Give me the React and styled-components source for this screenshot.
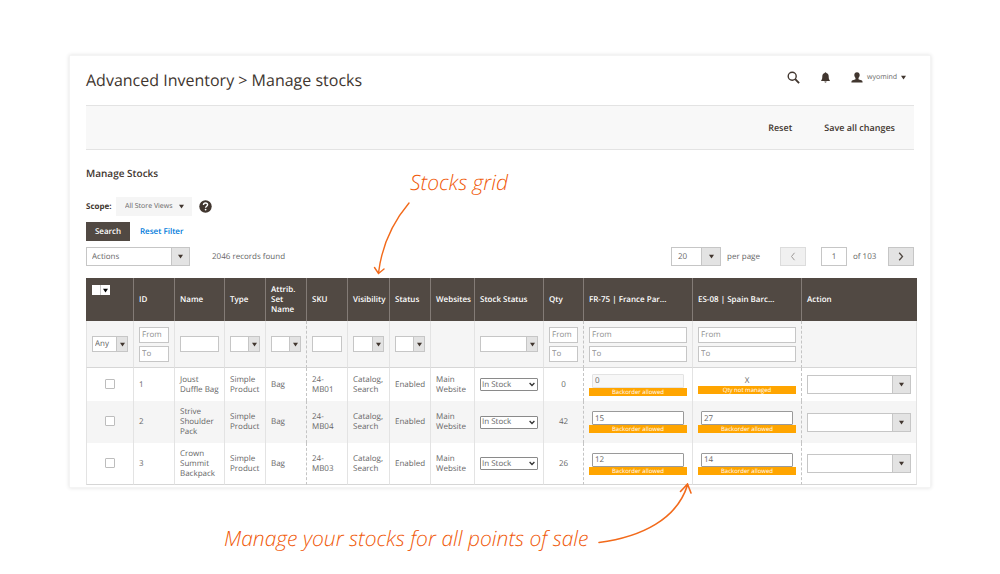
import React from "react";
import styled, { createGlobalStyle, css } from "styled-components";

const ink = "#41362f";
const brown = "#514943";
const grey = "#666666";
const line = "#e3e3e3";
const field = "#c6c6c6";
const accent = "#f26a1b";

const GlobalStyle = createGlobalStyle`
  *, *::before, *::after {
    box-sizing: border-box;
  }

  body {
    margin: 0;
    background: #ffffff;
    color: ${grey};
    font-family: "Open Sans", "Noto Sans", sans-serif;
    font-size: 8px;
    line-height: 10px;
    text-rendering: geometricPrecision;
  }

  button, input, select {
    font: inherit;
    color: inherit;
    margin: 0;
    text-rendering: inherit;
  }
`;

const Page = styled.main`
  padding: 55px 69px 0;
`;

const Card = styled.section`
  position: relative;
  padding: 0 13px 2px 16px;
  border: 1px solid #f4f4f4;
  background: #ffffff;
  box-shadow: 0 0 4px rgba(0, 0, 0, 0.12);
`;

const Inset = styled.div`
  padding-right: 3px;
`;

const Header = styled.header`
  display: flex;
  align-items: center;
  justify-content: space-between;
  height: 49px;
  padding: 0 8px 2px 0;
`;

const Title = styled.h1`
  margin: 0;
  color: ${ink};
  font-size: 16px;
  font-weight: 400;
  line-height: 24px;
`;

const UserTools = styled.nav`
  display: flex;
  align-items: center;
  margin-top: -4px;
  gap: 21px;
`;

const ToolButton = styled.button`
  display: flex;
  align-items: center;
  gap: 4px;
  padding: 0;
  border: 0;
  background: none;
  color: ${ink};
  cursor: pointer;
`;

const UserName = styled.span`
  color: ${grey};
  font-size: 7px;
`;

const PageActions = styled.div`
  display: flex;
  align-items: center;
  justify-content: flex-end;
  gap: 32px;
  height: 45px;
  padding: 0 19px;
  border: solid ${line};
  border-width: 1px 0;
  background: #f8f8f8;
`;

const PlainButton = styled.button`
  padding: 0;
  border: 0;
  background: none;
  color: ${ink};
  font-size: 9px;
  font-weight: 600;
  line-height: 14px;
  cursor: pointer;
`;

const Heading = styled.h2`
  margin: 16px 0 17px;
  color: ${ink};
  font-size: 10px;
  font-weight: 600;
  line-height: 14px;
`;

const Row = styled.div`
  display: flex;
  align-items: center;
  height: 19px;
  margin-bottom: ${(props) => props.$after || 6}px;
`;

const ScopeLabel = styled.label`
  width: 30px;
  color: ${ink};
  font-weight: 700;
`;

const SearchButton = styled.button`
  height: 19px;
  width: 44px;
  margin-right: 10px;
  padding: 0;
  border: 1px solid ${brown};
  background: ${brown};
  color: #ffffff;
  font-weight: 600;
  cursor: pointer;
`;

const ResetLink = styled.a`
  color: #007bdb;
  font-weight: 600;
  text-decoration: none;
`;

const HelpButton = styled.button`
  display: flex;
  margin-left: 7px;
  padding: 0;
  border: 0;
  background: none;
  cursor: pointer;
`;

const SelectWrap = styled.span`
  position: relative;
  display: block;
  width: ${(props) => (props.$width ? `${props.$width}px` : "100%")};
  height: ${(props) => props.$height || 19}px;

  select {
    display: block;
    width: 100%;
    height: 100%;
    padding: 0 ${(props) => (props.$flat ? 8 : props.$arrow)}px 0 ${(props) => props.$pad || 5}px;
    border: 1px solid ${(props) => (props.$flat ? "#f5f5f5" : field)};
    border-radius: 0;
    background: ${(props) => (props.$flat ? "#f5f5f5" : "#ffffff")};
    font-size: ${(props) => (props.$flat ? 7 : 8)}px;
    appearance: none;
  }
`;

const SelectArrow = styled.span`
  position: absolute;
  top: 0;
  right: 0;
  bottom: 0;
  display: flex;
  align-items: center;
  justify-content: center;
  width: ${(props) => props.$size}px;
  color: ${ink};
  pointer-events: none;

  ${(props) =>
    !props.$flat &&
    css`
      border: 1px solid ${field};
      background: #e3e3e3;
    `}
`;

const Records = styled.span`
  margin-left: 22px;
`;

const Pager = styled.div`
  display: flex;
  align-items: center;
  margin-left: auto;
`;

const PagerText = styled.span`
  width: ${(props) => props.$width}px;
  padding-left: 6px;
`;

const PagerButton = styled.button`
  display: flex;
  align-items: center;
  justify-content: center;
  width: 26px;
  height: 19px;
  padding: 0;
  border: 1px solid ${(props) => (props.disabled ? "#dcdcdc" : field)};
  background: ${(props) => (props.disabled ? "#f0f0f0" : "#e3e3e3")};
  color: ${(props) => (props.disabled ? "#9c9896" : brown)};
`;

const PageInput = styled.input`
  width: 26px;
  height: 19px;
  margin-left: 15px;
  padding: 0;
  border: 1px solid ${field};
  text-align: center;
`;

const Table = styled.table`
  width: 100%;
  table-layout: fixed;
  border-collapse: separate;
  border-spacing: 0;
`;

const HeadCell = styled.th`
  height: 43px;
  padding: 0 5px;
  border-left: 1px solid ${(props) => (props.$first ? brown : "#837b76")};
  background: ${brown};
  color: #ffffff;
  font-weight: 600;
  text-align: left;
  vertical-align: ${(props) => (props.$first ? "top" : "middle")};
  white-space: ${(props) => (props.$nowrap ? "nowrap" : "normal")};
`;

const HeadSelect = styled.select`
  display: block;
  width: 18px;
  height: 10px;
  margin-top: 7px;
  padding: 0;
  border: 0;
  border-radius: 0;
  background: #ffffff;
  appearance: none;
`;

const MassSelect = styled.span`
  position: relative;
  display: block;
  width: 18px;
`;

const MassArrow = styled.span`
  position: absolute;
  top: 0;
  right: 0;
  bottom: 0;
  display: flex;
  align-items: center;
  padding: 0 2px;
  border-left: 1px solid ${field};
  color: #000000;
  pointer-events: none;
`;

const Cell = styled.td`
  height: ${(props) => props.$height}px;
  padding: 0 5px;
  border-left: 1px ${(props) => (props.$dashed ? "dashed #c4c4c4" : `solid ${line}`)};
  text-align: ${(props) => props.$align || "left"};
  vertical-align: middle;

  &:last-child {
    border-right: 1px solid ${line};
  }
`;

const BodyRow = styled.tr`
  background: ${(props) => (props.$shade ? "#f5f5f5" : "#ffffff")};

  &:last-child td {
    border-bottom: 1px solid #d6d6d6;
  }
`;

const FilterRow = styled.tr`
  background: #f5f5f5;

  td {
    border-bottom: 1px solid #d6d6d6;
  }
`;

const FilterInput = styled.input`
  display: block;
  width: 100%;
  height: 16px;
  padding: 0 2px;
  border: 1px solid ${field};
  background: #ffffff;

  & + & {
    margin-top: 3px;
  }

  &::placeholder {
    color: #8f8f8f;
    opacity: 1;
  }
`;

const Tick = styled.input`
  display: block;
  width: 10px;
  height: 10px;
  margin: 0 auto 2px;
  border: 1px solid #bdbdbd;
  border-radius: 1px;
  background: #ffffff;
  appearance: none;
`;

const StockSelect = styled.select`
  display: block;
  width: 100%;
  height: 13px;
  padding: 0 1px;
  border: 1px solid #8a8a8a;
  border-radius: 1px;
  background: #ffffff;
  appearance: none;
`;

const StockWrap = styled.span`
  position: relative;
  display: block;
`;

const StockArrow = styled.span`
  position: absolute;
  top: 4px;
  right: 3px;
  display: flex;
  color: #333333;
  pointer-events: none;
`;

const QtyInput = styled.input`
  display: block;
  width: calc(100% - 6px);
  height: 14px;
  margin: 0 3px;
  padding: 0 2px;
  border: 1px solid #9a9a9a;
  border-radius: 1px;
  background: #ffffff;

  &:disabled {
    border-color: ${line};
    background: #f7f7f7;
    color: ${grey};
  }
`;

const Unmanaged = styled.div`
  text-align: center;
`;

const Flag = styled.div`
  height: 8px;
  background: #ffa500;
  color: #ffffff;
  font-size: 6px;
  line-height: 8px;
  text-align: center;
`;

const noteText = css`
  color: #f05a0a;
  font-size: 21px;
  font-style: italic;
  font-weight: 300;
  line-height: 24px;
  white-space: nowrap;
`;

const GridNote = styled.div`
  position: absolute;
  top: 115px;
  left: 303px;
  pointer-events: none;
  ${noteText}

  span {
    display: block;
    padding-left: 37px;
  }

  svg {
    display: block;
    margin-top: 6px;
  }
`;

const StockNote = styled.p`
  position: relative;
  display: grid;
  grid-template-columns: 372px 98px;
  align-items: end;
  margin: -5px 0 0 155px;
  ${noteText}

  svg {
    display: block;
    margin-bottom: 6px;
  }
`;

const Caret = ({ size = 5 }) => (
  <svg width={size} height={size} viewBox="0 0 6 6" aria-hidden="true">
    <path d="M0 1h6L3 5.4z" fill="currentColor" />
  </svg>
);

const DropDown = ({ label, options = [""], arrow = 12, flat, id, width, height, pad }) => (
  <SelectWrap $width={width} $height={height} $pad={pad} $arrow={arrow} $flat={flat}>
    <select id={id} aria-label={label}>
      {options.map((option) => (
        <option key={option}>{option}</option>
      ))}
    </select>
    <SelectArrow $size={arrow} $flat={flat}>
      <Caret />
    </SelectArrow>
  </SelectWrap>
);

const columns = [
  { key: "select", width: 47, filter: "any" },
  { key: "id", title: "ID", width: 41, filter: "range" },
  { key: "name", title: "Name", width: 50, filter: "text" },
  { key: "type", title: "Type", width: 41, filter: "select" },
  { key: "set", title: "Attrib. Set Name", width: 41, filter: "select" },
  { key: "sku", title: "SKU", width: 41, filter: "text", dashed: true },
  { key: "visibility", title: "Visibility", width: 42, filter: "select" },
  { key: "status", title: "Status", width: 41, filter: "select" },
  { key: "websites", title: "Websites", width: 44 },
  { key: "stock", title: "Stock Status", width: 69, filter: "select" },
  { key: "qty", title: "Qty", width: 40, filter: "range", align: "center" },
  { key: "france", title: "FR-75 | France Par...", width: 109, filter: "range", dashed: true },
  { key: "spain", title: "ES-08 | Spain Barc...", width: 109, filter: "range" },
  { key: "action", title: "Action", width: 116, dashed: true },
];

const shared = {
  type: "Simple Product",
  set: "Bag",
  visibility: "Catalog, Search",
  status: "Enabled",
  websites: "Main Website",
};

const products = [
  { ...shared, id: 1, name: "Joust Duffle Bag", sku: "24-MB01", qty: 0, france: 0, spain: null, locked: true, height: 33 },
  { ...shared, id: 2, name: "Strive Shoulder Pack", sku: "24-MB04", qty: 42, france: 15, spain: 27, height: 42 },
  { ...shared, id: 3, name: "Crown Summit Backpack", sku: "24-MB03", qty: 26, france: 12, spain: 14, height: 42 },
];

const Filter = ({ column }) => {
  const label = `Filter by ${column.title || "selection"}`;

  switch (column.filter) {
    case "any":
      return <DropDown label={label} options={["Any"]} height={16} pad={2} />;
    case "select":
      return <DropDown label={label} height={16} />;
    case "text":
      return <FilterInput aria-label={label} />;
    case "range":
      return (
        <>
          <FilterInput aria-label={`${label} from`} placeholder="From" />
          <FilterInput aria-label={`${label} to`} placeholder="To" />
        </>
      );
    default:
      return null;
  }
};

const StockQty = ({ label, value, locked }) =>
  value === null ? (
    <>
      <Unmanaged>X</Unmanaged>
      <Flag>Qty not managed</Flag>
    </>
  ) : (
    <>
      <QtyInput aria-label={label} defaultValue={value} disabled={locked} />
      <Flag>Backorder allowed</Flag>
    </>
  );

const CellContent = ({ column, product }) => {
  switch (column.key) {
    case "select":
      return <Tick type="checkbox" aria-label={`Select ${product.name}`} />;
    case "stock":
      return (
        <StockWrap>
          <StockSelect aria-label={`Stock status of ${product.name}`}>
            <option>In Stock</option>
            <option>Out of Stock</option>
          </StockSelect>
          <StockArrow>
            <svg width="6" height="5" viewBox="0 0 6 5" fill="none" stroke="currentColor" strokeWidth="1.3">
              <path d="M.6 1 3 3.5 5.4 1" />
            </svg>
          </StockArrow>
        </StockWrap>
      );
    case "france":
    case "spain":
      return (
        <StockQty
          label={`${column.title} ${product.name}`}
          value={product[column.key]}
          locked={product.locked}
        />
      );
    case "action":
      return <DropDown label={`Action for ${product.name}`} arrow={19} />;
    default:
      return product[column.key];
  }
};

const StockGrid = () => (
  <Table>
    <colgroup>
      {columns.map((column) => (
        <col key={column.key} width={column.width} />
      ))}
    </colgroup>
    <thead>
      <tr>
        {columns.map((column) => (
          <HeadCell key={column.key} $first={!column.title} $nowrap={column.key !== "set"}>
            {column.title || (
              <MassSelect>
                <HeadSelect aria-label="Mass selection" />
                <MassArrow>
                  <Caret />
                </MassArrow>
              </MassSelect>
            )}
          </HeadCell>
        ))}
      </tr>
    </thead>
    <tbody>
      <FilterRow>
        {columns.map((column) => (
          <Cell key={column.key} $height={47} $dashed={column.dashed}>
            <Filter column={column} />
          </Cell>
        ))}
      </FilterRow>
      {products.map((product, index) => (
        <BodyRow key={product.id} $shade={index % 2 === 1}>
          {columns.map((column) => (
            <Cell
              key={column.key}
              $height={product.height}
              $dashed={column.dashed}
              $align={column.align}
            >
              <CellContent column={column} product={product} />
            </Cell>
          ))}
        </BodyRow>
      ))}
    </tbody>
  </Table>
);

const App = () => (
  <>
    <GlobalStyle />
    <Page>
      <Card>
        <Inset>
          <Header>
            <Title>Advanced Inventory &gt; Manage stocks</Title>
            <UserTools>
              <ToolButton aria-label="Search">
                <svg width="13" height="13" viewBox="0 0 13 13" fill="none" stroke="currentColor">
                  <circle cx="5.2" cy="5.2" r="4" strokeWidth="1.4" />
                  <path d="m8.2 8.2 3.9 3.9" strokeWidth="1.9" />
                </svg>
              </ToolButton>
              <ToolButton aria-label="Notifications">
                <svg width="9" height="11" viewBox="0 0 9 11" fill="currentColor">
                  <path d="M4.5.3c.5 0 .8.3.8.8C7 1.5 7.7 2.8 7.7 4.4c0 2.4.4 3.2 1.1 3.9v.7H.2v-.7c.7-.7 1.1-1.5 1.1-3.9C1.3 2.8 2 1.5 3.7 1.1c0-.5.3-.8.8-.8zM3.4 9.5h2.2c0 .7-.5 1.1-1.1 1.1s-1.1-.4-1.1-1.1z" />
                </svg>
              </ToolButton>
              <ToolButton>
                <svg width="12" height="11" viewBox="0 0 12 11" fill="currentColor">
                  <path d="M6 .3c1.7 0 2.7 1.2 2.7 2.8 0 1.2-.5 2.2-1.2 2.8v1.3c.5.5 1.7.7 2.8 1.1 1 .4 1.3 1 1.3 2.2H.4c0-1.2.3-1.8 1.3-2.2 1.1-.4 2.3-.6 2.8-1.1V5.9C3.8 5.3 3.3 4.3 3.3 3.1 3.3 1.5 4.3.3 6 .3z" />
                </svg>
                <UserName>wyomind</UserName>
                <Caret />
              </ToolButton>
            </UserTools>
          </Header>
          <PageActions>
            <PlainButton>Reset</PlainButton>
            <PlainButton>Save all changes</PlainButton>
          </PageActions>
          <Heading>Manage Stocks</Heading>
          <Row>
            <ScopeLabel htmlFor="scope">Scope:</ScopeLabel>
            <DropDown id="scope" options={["All Store Views"]} width={76} arrow={22} pad={8} flat />
            <HelpButton aria-label="Help">
              <svg width="13" height="13" viewBox="0 0 13 13" fill="none">
                <circle cx="6.5" cy="6.5" r="6.2" fill={ink} />
                <path
                  d="M4.5 5c0-1.200.8-2 2-2s2.100.7 2.100 1.800C8.600 6.200 6.600 6.200 6.600 7.800"
                  stroke="#ffffff"
                  strokeWidth="1.4"
                />
                <circle cx="6.6" cy="9.6" r=".9" fill="#ffffff" />
              </svg>
            </HelpButton>
          </Row>
          <Row>
            <SearchButton>Search</SearchButton>
            <ResetLink href="#">Reset Filter</ResetLink>
          </Row>
          <Row $after={12}>
            <DropDown label="Actions" options={["Actions"]} width={104} arrow={19} />
            <Records>2046 records found</Records>
            <Pager>
              <DropDown label="Records per page" options={["20"]} width={50} arrow={20} pad={6} />
              <PagerText $width={59}>per page</PagerText>
              <PagerButton disabled aria-label="Previous page">
                <svg width="6" height="9" viewBox="0 0 6 9" fill="none" stroke="currentColor">
                  <path d="M4.5.8 1.5 4.5l3 3.7" />
                </svg>
              </PagerButton>
              <PageInput aria-label="Page" defaultValue="1" />
              <PagerText $width={41}>of 103</PagerText>
              <PagerButton aria-label="Next page">
                <svg width="6" height="9" viewBox="0 0 6 9" fill="none" stroke="currentColor" strokeWidth="1.3">
                  <path d="m1.2.8 3.3 3.7-3.3 3.7" />
                </svg>
              </PagerButton>
            </Pager>
          </Row>
        </Inset>
        <StockGrid />
        <GridNote>
          <span>Stocks grid</span>
          <svg width="40" height="74" viewBox="0 0 40 74" fill="none" stroke={accent} strokeWidth="1.4" strokeLinecap="round">
            <path d="M36 2C20 21 9 43 5.5 72M1.5 66.5l4 6 5.5-4.5" />
          </svg>
        </GridNote>
      </Card>
      <StockNote>
        Manage your stocks for all points of sale
        <svg width="98" height="62" viewBox="0 0 98 62" fill="none" stroke={accent} strokeWidth="1.6" strokeLinecap="round">
          <path d="M3 59.5C46 54 81 36 91.5 2M84.5 8.5l7-7.5 3.5 9" />
        </svg>
      </StockNote>
    </Page>
  </>
);

export default App;
